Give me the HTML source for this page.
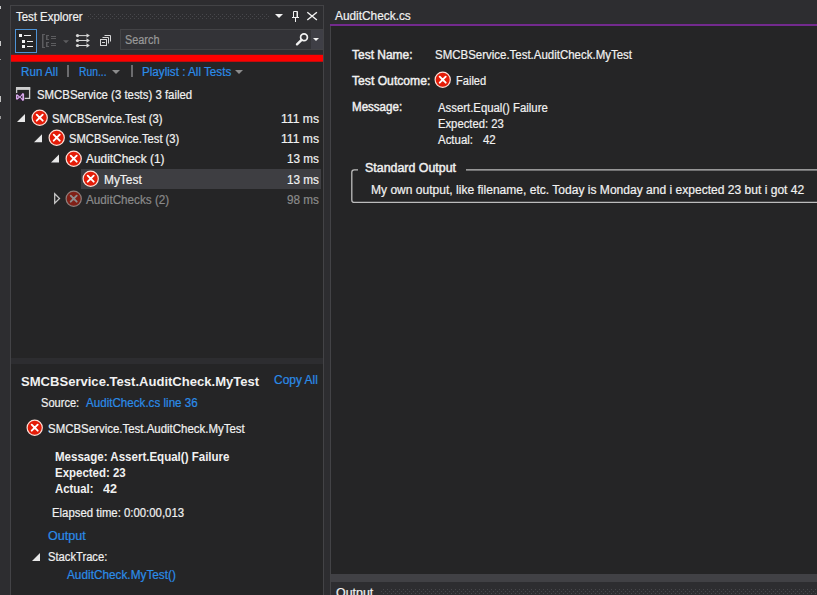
<!DOCTYPE html>
<html><head><meta charset="utf-8"><title>Test Explorer</title>
<style>
html,body{margin:0;padding:0;background:#2d2d30;}
body{width:817px;height:595px;overflow:hidden;font-family:"Liberation Sans",sans-serif;font-size:12px;color:#f1f1f1;}
#root{position:relative;width:817px;height:595px;overflow:hidden;background:#2d2d30;}
.t{position:absolute;line-height:16px;height:16px;white-space:pre;font-size:12px;transform-origin:0 0;-webkit-text-stroke:0.2px currentColor;}
.bd{font-weight:700;-webkit-text-stroke:0;}
.sb{-webkit-text-stroke:0.42px currentColor;}
.b{position:absolute;}
svg{position:absolute;overflow:visible;}
</style></head><body><div id="root">
<svg width="0" height="0" style="left:0;top:0"><defs>
<symbol id="err" viewBox="0 0 17 17"><circle cx="8.700" cy="8.700" r="7.6" fill="#e41c08" stroke="#fde0d8" stroke-width="1.200"/><path d="M5.700 5.700L11.700 11.700M11.700 5.700L5.700 11.700" stroke="#fff" stroke-width="1.900" stroke-linecap="round"/><circle cx="8.700" cy="8.700" r="1.500" fill="#fff"/></symbol>
<symbol id="errd" viewBox="0 0 17 17"><circle cx="8.5" cy="8.5" r="7.6" fill="#7a2a26" stroke="#857b7a" stroke-width="1"/><path d="M5.500 5.500L11.500 11.500M11.500 5.500L5.500 11.500" stroke="#8f8f8f" stroke-width="1.900" stroke-linecap="round"/></symbol>
<pattern id="grip" x="0" y="0" width="4" height="4" patternUnits="userSpaceOnUse"><rect x="2" y="0" width="1" height="1" fill="#47474b"/><rect x="0" y="2" width="1" height="1" fill="#47474b"/></pattern>
</defs></svg>
<!-- left strip marks -->
<div class="b" style="left:0;top:6px;width:1px;height:3px;background:#c8c8c8"></div>
<div class="b" style="left:0;top:41px;width:1px;height:5px;background:#c8c8c8"></div>
<div class="b" style="left:0;top:59px;width:1px;height:1px;background:#9a9a9a"></div>
<div class="b" style="left:0;top:96px;width:1px;height:6px;background:#c0c0c0"></div>
<div class="b" style="left:0;top:116px;width:1px;height:3px;background:#9a9a9a"></div>
<!-- left panel -->
<div class="b" style="left:10px;top:5px;width:314px;height:590px;border:1px solid #434346;border-bottom:0;box-sizing:border-box;background:#2d2d30"></div>
<div class="b" style="left:11px;top:62px;width:312px;height:296px;background:#252526"></div>
<div class="b" style="left:11px;top:358px;width:310px;height:6px;background:#2d2d30"></div>
<div class="b" style="left:11px;top:364px;width:312px;height:231px;background:#252526"></div>
<!-- grip -->
<svg style="left:88px;top:14px" width="181" height="6"><rect width="181" height="6" fill="url(#grip)"/></svg>
<!-- title icons -->
<svg style="left:270px;top:8px" width="52" height="18" viewBox="270 8 52 18">
<path d="M275 14h8l-4 4z" fill="#f1f1f1"/>
<path d="M293.5 17.5v-6h4v6M297 11.5v6" fill="none" stroke="#f1f1f1" stroke-width="1"/><path d="M292 17.5h7M295.5 17.5v4.5" fill="none" stroke="#f1f1f1" stroke-width="1"/>
<path d="M307.3 12.2l9.6 7.8M316.9 12.2l-9.6 7.8" stroke="#f1f1f1" stroke-width="1.4" fill="none"/>
</svg>
<!-- search box -->
<div class="b" style="left:120px;top:29px;width:203px;height:21px;box-sizing:border-box;border:1px solid #434346;background:#333337"></div>
<div class="b" style="left:311px;top:30px;width:12px;height:19px;background:#3f3f46"></div>
<svg style="left:292px;top:30px" width="30" height="20" viewBox="292 30 30 20">
<circle cx="304" cy="37.3" r="3.4" fill="none" stroke="#f1f1f1" stroke-width="1.7"/><path d="M301.6 39.8L297 44.3" stroke="#f1f1f1" stroke-width="2.4" stroke-linecap="round"/>
<path d="M313 38h6l-3 3z" fill="#f1f1f1"/>
</svg>
<!-- selected button -->
<div class="b" style="left:15px;top:29px;width:22px;height:24px;box-sizing:border-box;border:1px solid #4d93d6;background:#252526"></div>
<!-- toolbar icons -->
<svg style="left:15px;top:29px" width="100" height="24" viewBox="15 29 100 24">
<g fill="#f1f1f1"><rect x="19" y="34" width="3" height="3"/><rect x="24" y="35" width="7" height="1"/>
<rect x="22" y="40" width="3" height="3"/><rect x="27" y="41" width="6" height="1"/>
<rect x="22" y="45" width="3" height="3"/><rect x="27" y="46" width="6" height="1"/></g>
<g fill="#5c5c5f"><rect x="42" y="34" width="1.5" height="14"/><rect x="42" y="34" width="3" height="1"/><rect x="42" y="47" width="3" height="1"/>
<rect x="46" y="35" width="1.5" height="5"/><rect x="46" y="35" width="3" height="1"/><rect x="46" y="39" width="3" height="1"/>
<rect x="46" y="42" width="1.5" height="5"/><rect x="46" y="42" width="3" height="1"/><rect x="46" y="46" width="3" height="1"/>
<rect x="51" y="36" width="5" height="1"/><rect x="51" y="38" width="5" height="1"/><rect x="51" y="43" width="5" height="1"/><rect x="51" y="45" width="5" height="1"/>
<path d="M63 40.300h6l-3 3z"/></g>
<g fill="#d6d6d6" stroke="none"><circle cx="77.5" cy="35.6" r="1.6"/><circle cx="77.5" cy="40.5" r="1.6"/><circle cx="77.5" cy="45.5" r="1.6"/>
<rect x="77" y="35.1" width="11" height="1"/><rect x="77" y="40" width="11" height="1"/><rect x="77" y="45" width="11" height="1"/>
<path d="M86.5 33.4l3.4 2.2-3.4 2.2zM86.5 38.3l3.4 2.2-3.4 2.2zM86.5 43.3l3.4 2.2-3.4 2.2z"/></g>
<g fill="none" stroke="#d6d6d6" stroke-width="1"><rect x="100.5" y="39.5" width="6" height="6"/><path d="M102 42.5h3"/><path d="M102.5 37.5h6v6M104.5 35.5h6v6"/></g>
</svg>
<!-- red bar -->
<svg style="left:11px;top:54px" width="312" height="9"><rect x="0" y="0.800" width="312" height="6.900" fill="#fe0000"/></svg>
<!-- link row separators/arrows -->
<div class="b" style="left:67px;top:65px;width:2px;height:12px;background:#6c6c6e"></div>
<div class="b" style="left:131px;top:65px;width:2px;height:12px;background:#6c6c6e"></div>
<svg style="left:110px;top:66px" width="140" height="12" viewBox="110 66 140 12"><path d="M112 70h8l-4 4zM235 70h8l-4 4z" fill="#8c8c8c"/></svg>
<!-- project icon -->
<svg style="left:15px;top:86px" width="17" height="16" viewBox="15 86 17 16">
<rect x="16.600" y="88" width="13" height="10.400" fill="none" stroke="#cdcdcd" stroke-width="1.300"/><rect x="16" y="87" width="14.200" height="2.900" fill="#cdcdcd"/>
<rect x="15.500" y="93" width="9.200" height="8.500" fill="#252526"/>
<path d="M18 93.300h4.200l-2.100 2.900zM18 100.800h4.200l-2.100-2.900z" fill="#3c1248" fill-opacity="0.65"/>
<path d="M16 94.800l1.200-.6 2.800 2.200 2.600-3.300 1.500.6v6.600l-1.500.6-2.600-3.300-2.800 2.200-1.200-.6zM17.300 95.900v2.200l1.400-1.100zM22.400 95.300l-1.800 1.700 1.800 1.700z" fill="#dcaaf0" fill-rule="evenodd"/>
</svg>
<!-- selected row -->
<div class="b" style="left:81px;top:169px;width:240px;height:20px;background:#3e3e42"></div>
<!-- tree arrows -->
<svg style="left:0;top:0" width="330" height="595" viewBox="0 0 330 595">
<g fill="#e8e8e8"><path d="M25 114v8h-8z"/><path d="M42 134.300v8h-8z"/><path d="M59 154.600v8h-8z"/><path d="M40 553v8h-8z"/></g>
<path d="M54.700 193.800l4.800 4.700-4.800 4.700z" fill="none" stroke="#c6c6c6" stroke-width="1.300"/>
</svg>
<svg style="left:31px;top:109px" width="17" height="17"><use href="#err"/></svg>
<svg style="left:48px;top:129.3px" width="17" height="17"><use href="#err"/></svg>
<svg style="left:65px;top:149.7px" width="17" height="17"><use href="#err"/></svg>
<svg style="left:82px;top:170px" width="17" height="17"><use href="#err"/></svg>
<svg style="left:65.300px;top:190.300px;opacity:0.480" width="17" height="17"><use href="#err"/></svg>
<svg style="left:26px;top:419px" width="17" height="17"><use href="#err"/></svg>
<!-- editor -->
<div class="b" style="left:330px;top:26px;width:487px;height:569px;border-left:1px solid #434346"></div>
<div class="b" style="left:331px;top:26px;width:486px;height:548px;background:#252526"></div>
<div class="b" style="left:330px;top:24px;width:487px;height:2px;background:#732a8e"></div>
<div class="b" style="left:331px;top:574px;width:486px;height:8px;background:#414145"></div>
<svg style="left:434.1px;top:71.2px" width="17" height="17"><use href="#err"/></svg>
<!-- output grip -->
<svg style="left:381px;top:589px" width="436" height="6"><rect width="437" height="6" fill="url(#grip)"/></svg>
<!-- group box -->
<svg style="left:345px;top:160px" width="472" height="50" viewBox="345 160 472 50"><rect x="351.800" y="169.800" width="480" height="32.600" rx="2.500" fill="none" stroke="#bdbdbd" stroke-width="1.300"/></svg>
<div class="b" style="left:358px;top:162px;width:108px;height:14px;background:#252526"></div>
<span class="t" id="t1" style="left:15.5px;top:9px;color:#f1f1f1;transform:scaleX(0.9500)">Test Explorer</span>
<span class="t" id="t2" style="left:125.2px;top:32px;color:#999999;transform:scaleX(0.9053)">Search</span>
<span class="t" id="t3" style="left:21px;top:64px;color:#2b8ce8;transform:scaleX(0.9737)">Run All</span>
<span class="t" id="t4" style="left:78.5px;top:64px;color:#2b8ce8;transform:scaleX(0.8594)">Run...</span>
<span class="t" id="t5" style="left:141.8px;top:64px;color:#2b8ce8;transform:scaleX(0.9717)">Playlist : All Tests</span>
<span class="t" id="t6" style="left:37.3px;top:87px;color:#f1f1f1;transform:scaleX(0.9498)">SMCBService (3 tests) 3 failed</span>
<span class="t" id="r1" style="left:52px;top:111px;color:#f1f1f1;transform:scaleX(0.9364)">SMCBService.Test (3)</span>
<span class="t" id="r1b" style="left:281px;top:111px;color:#f1f1f1;transform:scaleX(1.0106)">111 ms</span>
<span class="t" id="r2" style="left:69px;top:131px;color:#f1f1f1;transform:scaleX(0.9347)">SMCBService.Test (3)</span>
<span class="t" id="r2b" style="left:281px;top:131px;color:#f1f1f1;transform:scaleX(1.0106)">111 ms</span>
<span class="t" id="r3" style="left:86px;top:151px;color:#f1f1f1;transform:scaleX(0.9899)">AuditCheck (1)</span>
<span class="t" id="r3b" style="left:287px;top:151px;color:#f1f1f1;transform:scaleX(0.9786)">13 ms</span>
<span class="t" id="r4" style="left:103.5px;top:172px;color:#f1f1f1;transform:scaleX(0.9921)">MyTest</span>
<span class="t" id="r4b" style="left:287px;top:172px;color:#f1f1f1;transform:scaleX(0.9786)">13 ms</span>
<span class="t" id="r5" style="left:86px;top:192px;color:#8a8a8a;transform:scaleX(0.9742)">AuditChecks (2)</span>
<span class="t" id="r5b" style="left:287px;top:192px;color:#8a8a8a;transform:scaleX(0.9786)">98 ms</span>
<span class="t bd" id="d1" style="left:20.8px;top:374px;color:#f1f1f1;font-size:13px;transform:scaleX(1.0042)">SMCBService.Test.AuditCheck.MyTest</span>
<span class="t" id="d2" style="left:274px;top:372px;color:#2b8ce8;transform:scaleX(0.9955)">Copy All</span>
<span class="t" id="d3" style="left:41px;top:395px;color:#f1f1f1;transform:scaleX(0.9227)">Source:</span>
<span class="t" id="d4" style="left:86.3px;top:395px;color:#2b8ce8;transform:scaleX(0.9679)">AuditCheck.cs line 36</span>
<span class="t" id="d5" style="left:48.3px;top:421px;color:#f1f1f1;transform:scaleX(0.9544)">SMCBService.Test.AuditCheck.MyTest</span>
<span class="t bd" id="d6" style="left:54.5px;top:449px;color:#f1f1f1;transform:scaleX(0.9609)">Message: Assert.Equal() Failure</span>
<span class="t bd" id="d7" style="left:54.5px;top:465px;color:#f1f1f1;transform:scaleX(0.9554)">Expected: 23</span>
<span class="t bd" id="d8a" style="left:54.5px;top:481px;color:#f1f1f1;transform:scaleX(0.9459)">Actual:</span>
<span class="t bd" id="d8b" style="left:103px;top:481px;color:#f1f1f1;transform:scaleX(1.0448)">42</span>
<span class="t" id="d9" style="left:51.6px;top:505px;color:#f1f1f1;transform:scaleX(0.9469)">Elapsed time: 0:00:00,013</span>
<span class="t" id="d10" style="left:48.1px;top:528px;color:#2b8ce8;transform:scaleX(1.0472)">Output</span>
<span class="t" id="d11" style="left:48.2px;top:549px;color:#f1f1f1;transform:scaleX(0.9324)">StackTrace:</span>
<span class="t" id="d12" style="left:67.1px;top:567px;color:#2b8ce8;transform:scaleX(0.9837)">AuditCheck.MyTest()</span>
<span class="t" id="e0" style="left:335.2px;top:8px;color:#f1f1f1;transform:scaleX(0.9883)">AuditCheck.cs</span>
<span class="t sb" id="e1" style="left:351.6px;top:47px;color:#f1f1f1;transform:scaleX(0.9984)">Test Name:</span>
<span class="t" id="e2" style="left:435.3px;top:47px;color:#f1f1f1;transform:scaleX(0.9558)">SMCBService.Test.AuditCheck.MyTest</span>
<span class="t sb" id="e3" style="left:351.6px;top:73px;color:#f1f1f1;transform:scaleX(1.0129)">Test Outcome:</span>
<span class="t" id="e4" style="left:456.3px;top:73px;color:#f1f1f1;transform:scaleX(0.9235)">Failed</span>
<span class="t sb" id="e5" style="left:351.6px;top:99px;color:#f1f1f1;transform:scaleX(0.9635)">Message:</span>
<span class="t" id="e6" style="left:438.3px;top:100px;color:#f1f1f1;transform:scaleX(0.9457)">Assert.Equal() Failure</span>
<span class="t" id="e7" style="left:438.3px;top:116px;color:#f1f1f1;transform:scaleX(0.9372)">Expected: 23</span>
<span class="t" id="e8a" style="left:438.3px;top:132px;color:#f1f1f1;transform:scaleX(0.9537)">Actual:</span>
<span class="t" id="e8b" style="left:483.4px;top:132px;color:#f1f1f1;transform:scaleX(0.9552)">42</span>
<span class="t sb" id="e9" style="left:365.4px;top:160px;color:#f1f1f1;transform:scaleX(1.0341)">Standard Output</span>
<span class="t" id="e10" style="left:370.8px;top:182px;color:#f1f1f1;transform:scaleX(1.0042)">My own output, like filename, etc. Today is Monday and i expected 23 but i got 42</span>
<span class="t" id="o1" style="left:335.8px;top:585px;color:#f1f1f1;transform:scaleX(1.0333)">Output</span>
</div></body></html>
